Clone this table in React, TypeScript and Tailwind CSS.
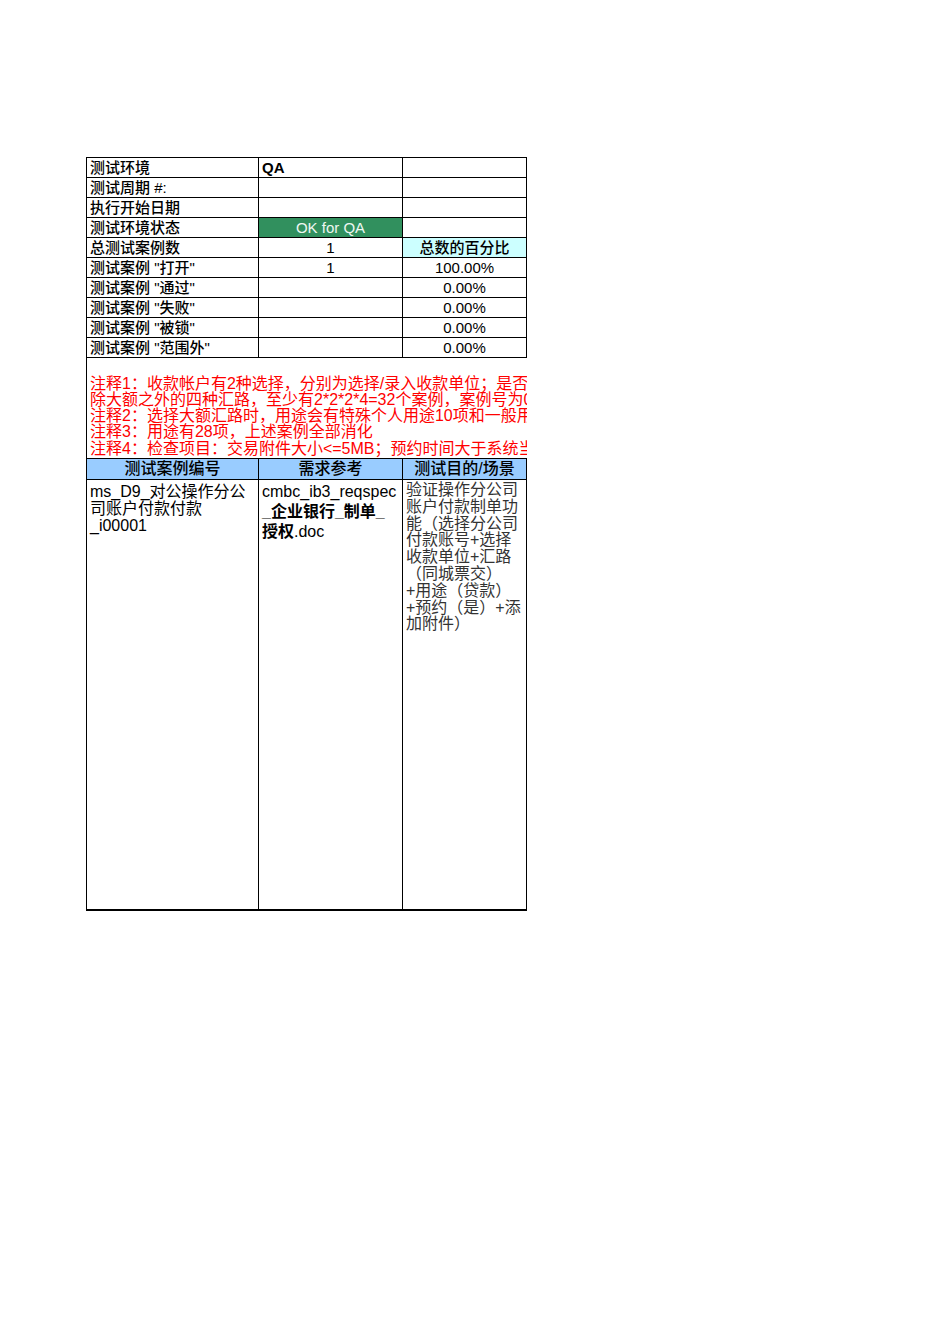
const font = { fontFamily: '"Liberation Sans", "Noto Sans CJK SC", sans-serif' };

const summaryRows = [
  { label: "测试环境", value: "QA", align: "left", pct: "" },
  { label: "测试周期 #:", value: "", align: "left", pct: "" },
  { label: "执行开始日期", value: "", align: "left", pct: "" },
  { label: "测试环境状态", value: "OK for QA", align: "green", pct: "" },
  { label: "总测试案例数", value: "1", align: "center", pct: "总数的百分比" },
  { label: '测试案例 "打开"', value: "1", align: "center", pct: "100.00%" },
  { label: '测试案例 "通过"', value: "", align: "center", pct: "0.00%" },
  { label: '测试案例 "失败"', value: "", align: "center", pct: "0.00%" },
  { label: '测试案例 "被锁"', value: "", align: "center", pct: "0.00%" },
  { label: '测试案例 "范围外"', value: "", align: "center", pct: "0.00%" },
];

const notes = [
  "注释1：收款帐户有2种选择，分别为选择/录入收款单位；是否",
  "除大额之外的四种汇路，至少有2*2*2*4=32个案例，案例号为0",
  "注释2：选择大额汇路时，用途会有特殊个人用途10项和一般用",
  "注释3：用途有28项，上述案例全部消化",
  "注释4：检查项目：交易附件大小<=5MB；预约时间大于系统当前",
];

const purpose = [
  "验证操作分公司",
  "账户付款制单功",
  "能（选择分公司",
  "付款账号+选择",
  "收款单位+汇路",
  "（同城票交）",
  "+用途（贷款）",
  "+预约（是）+添",
  "加附件）",
];

export default function App() {
  return (
    <div className="w-[950px] h-[1344px] bg-white pt-[157px] pl-[86px] text-black" style={font}>
      <div className="w-[441px]">
        {/* summary block */}
        <div className="border-t border-l border-black">
          {summaryRows.map((r, i) => (
            <div key={i} className="flex h-[20px] text-[15px] leading-[19px]">
              <div className="w-[172px] border-r border-b border-black pl-[3px] whitespace-nowrap font-medium">{r.label}</div>
              {r.align === "green" ? (
                <div className="w-[144px] border-r border-b border-black bg-[#31905e] text-[#eef7f1] text-center">{r.value}</div>
              ) : (
                <div
                  className={
                    r.align === "left"
                      ? "w-[144px] border-r border-b border-black pl-[3px] font-bold"
                      : "w-[144px] border-r border-b border-black text-center"
                  }
                >
                  {r.value}
                </div>
              )}
              <div
                className={
                  r.pct === "总数的百分比"
                    ? "w-[124px] border-r border-b border-black bg-[#ccffff] text-center font-medium"
                    : "w-[124px] border-r border-b border-black text-center"
                }
              >
                {r.pct}
              </div>
            </div>
          ))}
        </div>

        {/* notes */}
        <div className="h-[100px] border-l border-black overflow-hidden flex flex-col justify-end pl-[3px] pb-[1px] text-[16px] leading-[16.3px] text-[#ff0000]">
          {notes.map((n, i) => (
            <div key={i} className="whitespace-nowrap">{n}</div>
          ))}
        </div>

        {/* header */}
        <div className="flex h-[22px] border-t border-b border-l border-black bg-[#99ccff] text-[16px] leading-[20px] font-medium">
          <div className="w-[172px] border-r border-black text-center">测试案例编号</div>
          <div className="w-[144px] border-r border-black text-center">需求参考</div>
          <div className="w-[124px] border-r border-black text-center">测试目的/场景</div>
        </div>

        {/* case row */}
        <div className="flex h-[431px] border-l border-b-2 border-black">
          <div className="w-[172px] border-r border-black pl-[3px] pt-[3px] text-[16px] leading-[17px]">
            <div className="whitespace-nowrap">ms_D9_对公操作分公</div>
            <div className="whitespace-nowrap">司账户付款付款</div>
            <div className="whitespace-nowrap">_i00001</div>
          </div>
          <div className="w-[144px] border-r border-black pl-[3px] pt-[2px] text-[16px] leading-[20px]">
            <div className="whitespace-nowrap">cmbc_ib3_reqspec</div>
            <div className="whitespace-nowrap font-bold">_企业银行_制单_</div>
            <div className="whitespace-nowrap">
              <span className="font-bold">授权</span>.doc
            </div>
          </div>
          <div className="w-[124px] border-r border-black pl-[3px] pt-[2px] text-[16px] leading-[16.8px] text-[#333]">
            {purpose.map((p, i) => (
              <div key={i} className="whitespace-nowrap">{p}</div>
            ))}
          </div>
        </div>
      </div>
    </div>
  );
}
